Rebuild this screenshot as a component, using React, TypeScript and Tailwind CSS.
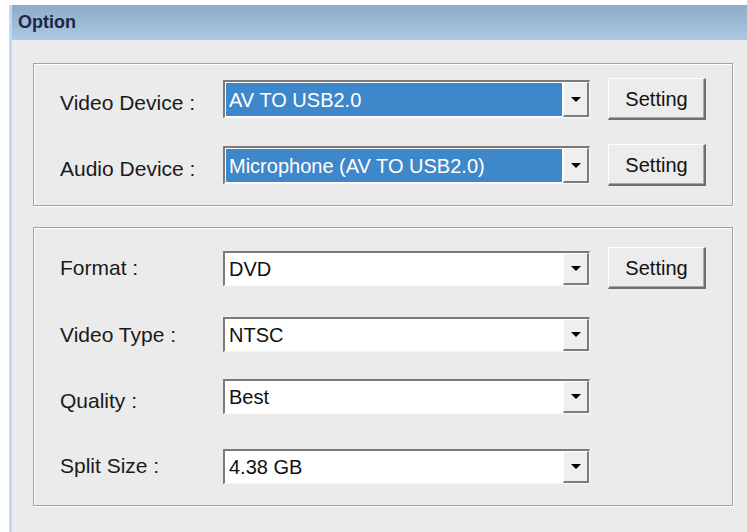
const sans = "font-['Liberation_Sans',Arial,sans-serif]";

// Sunken combo box with a raised drop-down button on the right
function Combo({ value, selected = false, tall = false }: { value: string; selected?: boolean; tall?: boolean }) {
  return (
    <div
      className={`flex w-[367px] shrink-0 border-t-2 border-l-2 border-r border-b border-t-[#7b7b7b] border-l-[#7b7b7b] border-r-[#f8f8f8] border-b-[#f8f8f8] bg-white ${
        tall ? 'h-[38px]' : 'h-[35px]'
      }`}
    >
      <div className="flex flex-1 p-[1px]">
        <div
          className={`flex flex-1 items-center pl-[3px] text-[20px] leading-none ${
            selected ? 'bg-[#3f87cb] text-white' : 'text-[#111]'
          }`}
        >
          {value}
        </div>
      </div>
      <div className="flex w-[26px] items-center justify-center border-t border-l border-r-2 border-b-2 border-t-white border-l-white border-r-[#7b7b7b] border-b-[#7b7b7b] bg-[#efefef]">
        <span className="h-0 w-0 border-x-[5px] border-t-[5px] border-x-transparent border-t-black" />
      </div>
    </div>
  );
}

function SettingButton() {
  return (
    <button className="ml-[18px] flex h-[42px] w-[98px] shrink-0 items-center justify-center border-t border-l border-r-2 border-b-2 border-t-white border-l-white border-r-[#6f6f6f] border-b-[#6f6f6f] bg-[#ececec] text-[20px] text-[#111] shadow-[inset_-1px_-1px_0_#a8a8a8]">
      Setting
    </button>
  );
}

function Label({ text, className = '' }: { text: string; className?: string }) {
  return <span className={`w-[163px] shrink-0 text-[21px] text-[#1a1a1a] ${className}`}>{text}</span>;
}

const groupBox =
  'border border-[#a2a2a2] shadow-[inset_1px_1px_0_#fff,1px_1px_0_#fff]';

export default function App() {
  return (
    <div className={`h-[532px] w-[747px] overflow-hidden bg-white pt-[5px] pl-[9px] ${sans}`}>
      <div className="flex h-full flex-col border-l-[3px] border-[#c3d9ee]">
        {/* title bar */}
        <div className="flex h-[35px] shrink-0 items-center bg-gradient-to-b from-[#8dabc7] to-[#adcae4] pl-[6px]">
          <span className="text-[18px] font-semibold text-[#1e2744]">Option</span>
        </div>

        <div className="flex flex-1 flex-col bg-[#ebebeb] pt-[23px] pl-[21px]">
          {/* devices */}
          <div className={`flex h-[143px] w-[700px] flex-col gap-[24px] pt-[14px] pl-[26px] ${groupBox}`}>
            <div className="flex items-center">
              <Label text="Video Device :" className="mt-[8px]" />
              <Combo value="AV TO USB2.0" selected tall />
              <SettingButton />
            </div>
            <div className="flex items-center">
              <Label text="Audio Device :" className="mt-[8px]" />
              <Combo value="Microphone (AV TO USB2.0)" selected tall />
              <SettingButton />
            </div>
          </div>

          {/* output */}
          <div className={`mt-[21px] flex h-[279px] w-[700px] flex-col pt-[19px] pl-[26px] ${groupBox}`}>
            <div className="flex items-center">
              <Label text="Format :" />
              <Combo value="DVD" />
              <SettingButton />
            </div>
            <div className="mt-[28px] flex items-center">
              <Label text="Video Type :" />
              <Combo value="NTSC" />
            </div>
            <div className="mt-[25px] flex items-center">
              <Label text="Quality :" className="mt-[8px]" />
              <Combo value="Best" />
            </div>
            <div className="mt-[32px] flex items-center">
              <Label text="Split Size :" />
              <Combo value="4.38 GB" />
            </div>
          </div>
        </div>
      </div>
    </div>
  );
}
